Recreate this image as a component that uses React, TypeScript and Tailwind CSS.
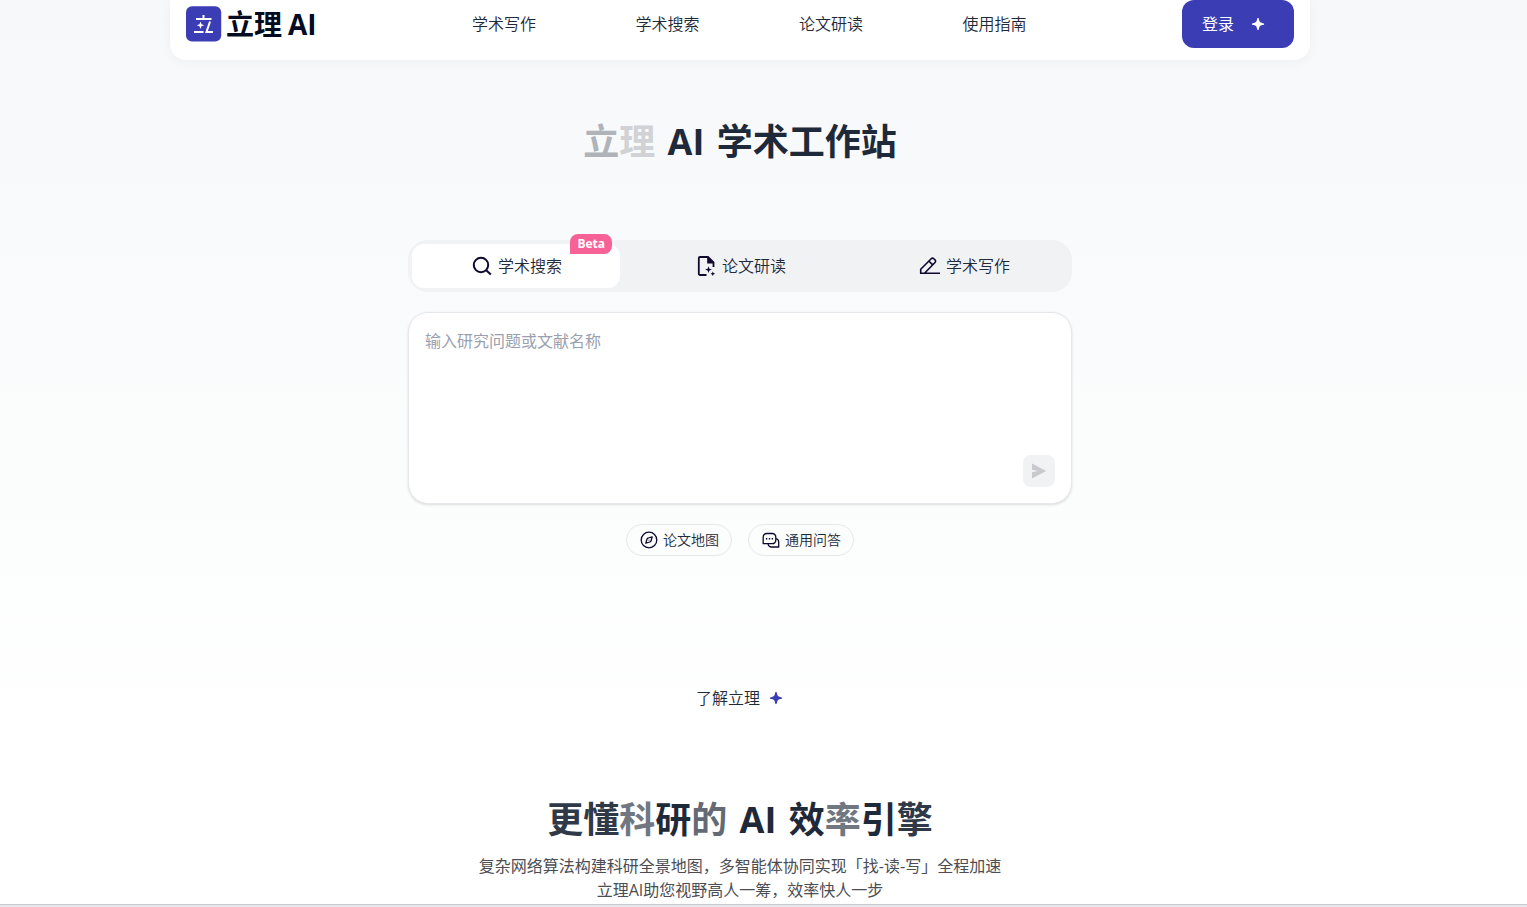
import { useState } from "react";
import type { ReactNode } from "react";

const NAV_LINKS = ["学术写作", "学术搜索", "论文研读", "使用指南"];

function Sparkle({ className }: { className?: string }) {
  return (
    <svg viewBox="0 0 24 24" fill="currentColor" className={className} aria-hidden="true">
      <path d="M12 5.800c.6 0 .8.8 1.100 2.100.5 1.900 1.100 2.500 3 3 1.300.3 2.100.5 2.100 1.100s-.8.8-2.100 1.100c-1.900.5-2.500 1.100-3 3-.3 1.300-.5 2.100-1.100 2.100s-.8-.8-1.100-2.100c-.5-1.900-1.100-2.500-3-3-1.300-.3-2.100-.5-2.100-1.100s.8-.8 2.100-1.100c1.900-.5 2.500-1.100 3-3 .3-1.300.5-2.100 1.100-2.100z" />
    </svg>
  );
}

function LogoMark() {
  return (
    <svg viewBox="0 0 36 36" className="size-9" aria-hidden="true">
      <rect x="0" y="0.300" width="35.200" height="35.200" rx="6" fill="#3b3db5" />
      <g stroke="#fff" strokeWidth="2" fill="none">
        <path d="M17.500 9v4M10 13h15.500M8 26h9.500M24 15.500 20.500 26H27" />
      </g>
      <path d="M14.500 15.500l1 2.700 2.700 1-2.700 1-1 2.700-1-2.700-2.700-1 2.700-1z" fill="#fff" />
    </svg>
  );
}

function SearchIcon() {
  return (
    <svg viewBox="0 0 24 24" fill="none" stroke="currentColor" strokeWidth="2" className="size-6" aria-hidden="true">
      <circle cx="11" cy="11" r="7.200" />
      <path d="M16.200 16.200 20.800 20.500" />
    </svg>
  );
}

function PaperIcon() {
  return (
    <svg viewBox="0 0 24 24" fill="none" stroke="currentColor" strokeWidth="1.800" className="size-6" aria-hidden="true">
      <path d="M12.500 21H6a1.200 1.200 0 0 1-1.200-1.200V4.200A1.200 1.200 0 0 1 6 3h8l5.500 5.500V13" strokeLinejoin="round" />
      <path d="M13.200 2.500 20.200 9.500h-7z" fill="currentColor" stroke="none" />
      <path d="M14.500 12.200l.9 2.500 2.500.9-2.500.9-.9 2.500-.9-2.500-2.500-.9 2.500-.9zM18.800 17.500l.7 1.600 1.600.7-1.600.7-.7 1.600-.7-1.600-1.600-.7 1.600-.7z" fill="currentColor" stroke="none" />
    </svg>
  );
}

function PenIcon() {
  return (
    <svg viewBox="0 0 24 24" fill="none" stroke="currentColor" strokeWidth="1.600" strokeLinejoin="round" className="size-6" aria-hidden="true">
      <path d="M2.700 19.200v-4L13.200 4.700a1.800 1.800 0 0 1 2.600 0l1.200 1.200a1.800 1.800 0 0 1 0 2.600L6.500 19.200M11 7.200l3.700 3.700M2 19.200H22" />
    </svg>
  );
}

function CompassIcon() {
  return (
    <svg viewBox="0 0 20 20" fill="none" stroke="currentColor" strokeWidth="1.300" className="size-5" aria-hidden="true">
      <circle cx="10" cy="10" r="7.800" />
      <path d="M13.200 6.800 12 11 11 12 6.800 13.200 8 9 9 8z" strokeLinejoin="round" />
      <circle cx="10" cy="10" r="0.600" fill="currentColor" stroke="none" />
    </svg>
  );
}

function ChatIcon() {
  return (
    <svg viewBox="0 0 20 20" fill="none" stroke="currentColor" strokeWidth="1.300" strokeLinejoin="round" className="size-5" aria-hidden="true">
      <path d="M2.200 13.700V7a3.500 3.500 0 0 1 3.500-3.500h5.600A3.500 3.500 0 0 1 14.800 7v3.200a3.500 3.500 0 0 1-3.500 3.500z" />
      <path d="M14.800 8.700a3.500 3.500 0 0 1 2.900 3.300v5H10a3 3 0 0 1-2.800-3.300" />
      <path d="M4.900 8.700h1.400M7.800 8.700h1.400M10.700 8.700h1.400" strokeWidth="1.500" />
    </svg>
  );
}

const TABS: { id: string; label: string; icon: ReactNode; beta?: boolean }[] = [
  { id: "search", label: "学术搜索", icon: <SearchIcon />, beta: true },
  { id: "read", label: "论文研读", icon: <PaperIcon /> },
  { id: "write", label: "学术写作", icon: <PenIcon /> },
];

function Header() {
  return (
    <header className="flex w-full max-w-[1140px] items-center justify-between rounded-b-2xl bg-white px-4 pb-3 shadow-[0_2px_12px_rgba(0,0,0,0.04)]">
      <a href="#" className="flex items-center gap-1 text-[#020b22]">
        <LogoMark />
        <span className="flex items-center gap-1.5 text-[28px] leading-9 font-bold">
          <span>立理</span>
          <span>AI</span>
        </span>
      </a>
      <nav className="grid w-[654px] grid-cols-4 text-center">
        {NAV_LINKS.map((link) => (
          <a key={link} href="#">
            {link}
          </a>
        ))}
      </nav>
      <button type="button" className="flex h-12 items-center gap-3 rounded-xl bg-[#3b3db5] pr-6 pl-5 font-normal text-white">
        登录
        <Sparkle className="size-6" />
      </button>
    </header>
  );
}

export default function App() {
  const [tab, setTab] = useState("search");
  const [query, setQuery] = useState("");

  return (
    <div className="flex min-h-screen flex-col bg-linear-to-b from-[#f7f8fa] via-[#fbfcfc] via-50% to-white to-80% font-['Open_Sans','Noto_Sans_CJK_SC',sans-serif] text-base font-[350] text-gray-800">
      <div className="flex flex-col items-center pr-[47px]">
        <Header />

        <main className="flex w-full max-w-[664px] flex-col items-center pt-[62px]">
          <h1 className="text-4xl leading-10 font-bold">
            <span className="text-[#b0b4b9]">立</span>
            <span className="text-[#d0d2d5]">理</span>
            <span className="mx-[3px]"> AI </span>
            学术工作站
          </h1>

          <div className="mt-[78px] grid w-full grid-cols-3 gap-4 rounded-[20px] bg-[#f1f2f4] p-1">
            {TABS.map((t) => (
              <button
                key={t.id}
                type="button"
                onClick={() => setTab(t.id)}
                className={`relative flex h-11 items-center justify-center gap-1 rounded-xl ${tab === t.id ? "bg-white" : ""}`}
              >
                <span className="text-[#10082e]">{t.icon}</span>
                {t.label}
                {t.beta && (
                  <span className="absolute -top-2.5 right-2 rounded-lg rounded-bl-none bg-[#f66295] px-[7px] text-xs leading-5 font-bold text-white">
                    Beta
                  </span>
                )}
              </button>
            ))}
          </div>

          <form
            onSubmit={(e) => e.preventDefault()}
            className="mt-5 flex w-full flex-col rounded-[20px] border border-gray-200 bg-white p-4 shadow-sm"
          >
            <textarea
              aria-label="输入研究问题或文献名称"
              placeholder="输入研究问题或文献名称"
              value={query}
              onChange={(e) => setQuery(e.target.value)}
              className="h-[126px] w-full resize-none leading-6 font-normal outline-none placeholder:text-gray-400"
            />
            <button
              type="submit"
              aria-label="发送"
              disabled={!query}
              className="flex size-8 items-center justify-center self-end rounded-lg bg-[#f1f2f4] text-[#c9c9cd]"
            >
              <svg viewBox="0 0 16 16" fill="currentColor" className="size-4" aria-hidden="true">
                <path d="M1 .5 15.200 8 1 15.500V9.200L7 8 1 6.800z" />
              </svg>
            </button>
          </form>

          <div className="mt-5 flex gap-4 text-sm">
            <button type="button" className="flex h-8 items-center gap-1 rounded-full border border-gray-200 px-3">
              <span className="text-[#10082e]">
                <CompassIcon />
              </span>
              论文地图
            </button>
            <button type="button" className="flex h-8 items-center gap-1 rounded-full border border-gray-200 px-3">
              <span className="text-[#10082e]">
                <ChatIcon />
              </span>
              通用问答
            </button>
          </div>

          <a href="#about" className="mt-[130px] flex items-center gap-1 pl-1">
            了解立理
            <Sparkle className="size-6 text-[#3b3db5]" />
          </a>
        </main>

        <section id="about" className="flex flex-col items-center pt-[90px] pb-0.5 text-center">
          <h2 className="text-4xl leading-10 font-bold">
            <span className="text-[#2f3947]">更懂</span>
            <span className="text-[#717780]">科</span>
            研
            <span className="text-[#636a74]">的</span>
            <span className="mx-[3px]"> AI </span>
            效
            <span className="text-[#717780]">率</span>
            引
            <span className="text-[#2f3947]">擎</span>
          </h2>
          <p className="mt-[14px] leading-6 font-normal text-[#4c4d52]">
            复杂网络算法构建科研全景地图，多智能体协同实现「找-读-写」全程加速
            <br />
            立理AI助您视野高人一筹，效率快人一步
          </p>
        </section>
      </div>
      <div className="h-[3px] border-t border-[#c9cacd] bg-[#e5e7ec]" />
    </div>
  );
}
